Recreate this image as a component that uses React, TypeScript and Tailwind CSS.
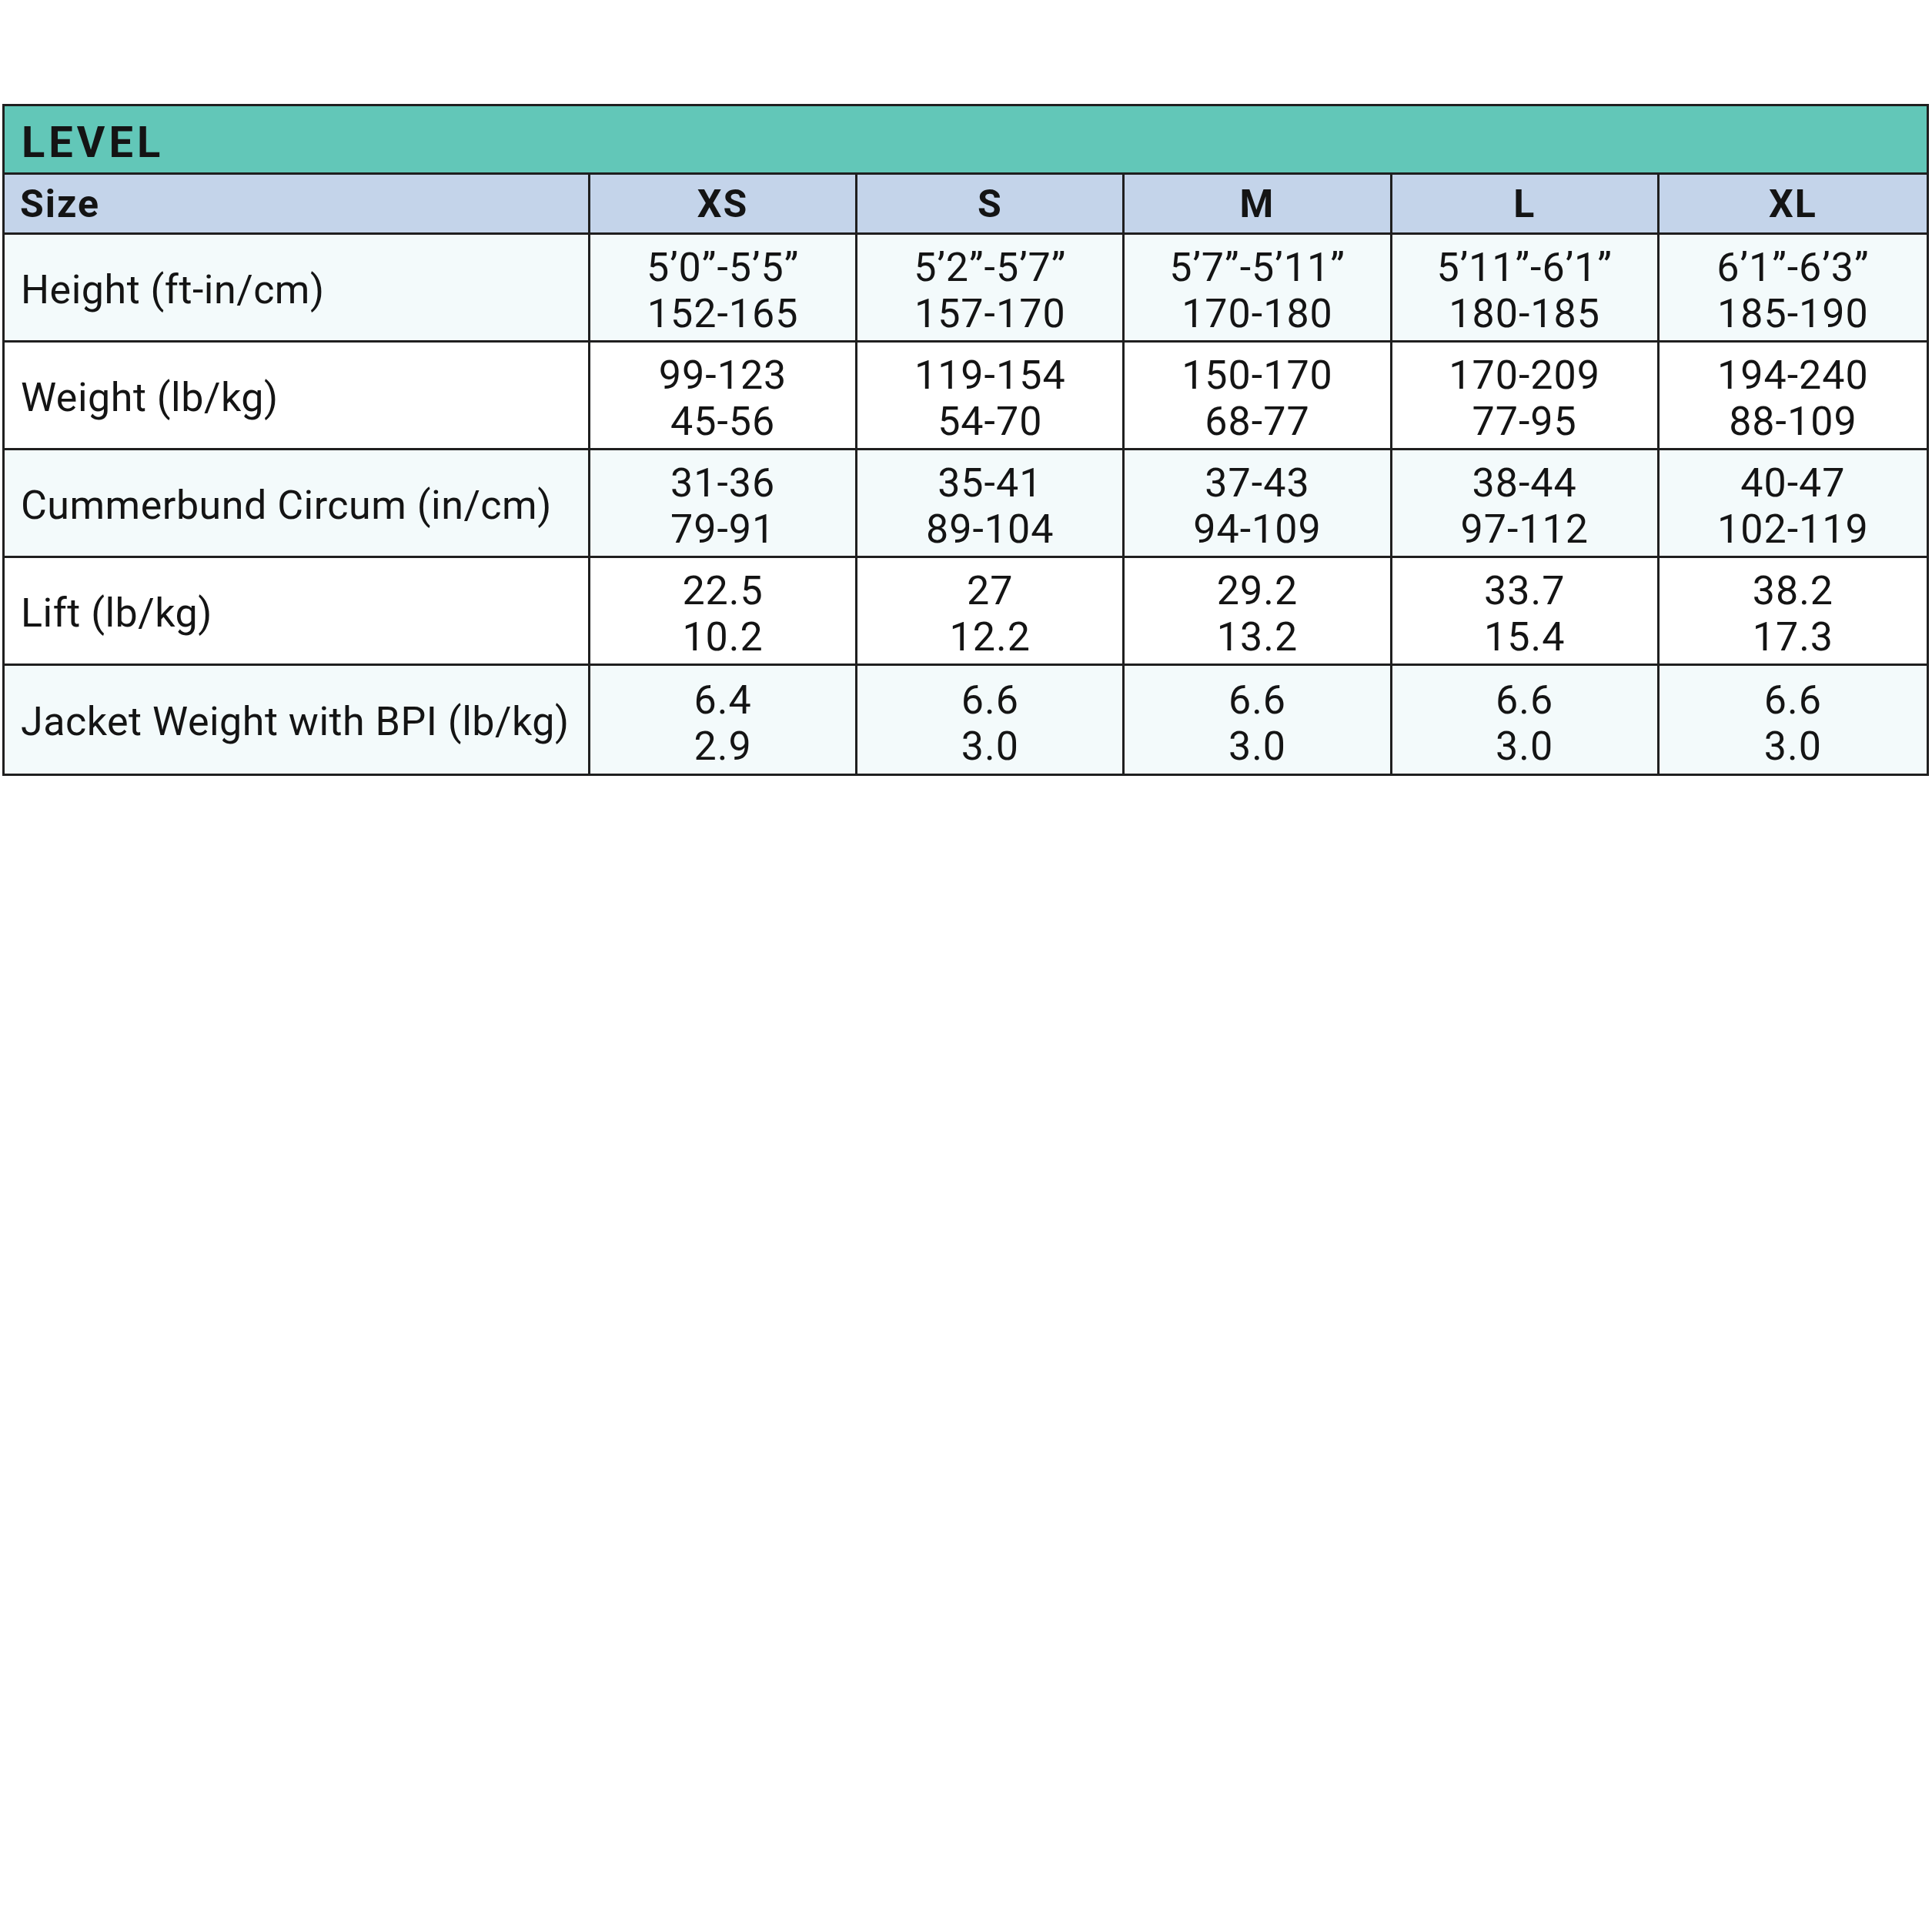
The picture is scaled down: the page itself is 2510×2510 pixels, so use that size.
const SIZES = ["XS", "S", "M", "L", "XL"];

const ROWS: { label: string; values: [string, string][]; shaded: boolean }[] = [
  {
    label: "Height (ft-in/cm)",
    values: [
      ["5’0”-5’5”", "152-165"],
      ["5’2”-5’7”", "157-170"],
      ["5’7”-5’11”", "170-180"],
      ["5’11”-6’1”", "180-185"],
      ["6’1”-6’3”", "185-190"],
    ],
    shaded: true,
  },
  {
    label: "Weight (lb/kg)",
    values: [
      ["99-123", "45-56"],
      ["119-154", "54-70"],
      ["150-170", "68-77"],
      ["170-209", "77-95"],
      ["194-240", "88-109"],
    ],
    shaded: false,
  },
  {
    label: "Cummerbund Circum (in/cm)",
    values: [
      ["31-36", "79-91"],
      ["35-41", "89-104"],
      ["37-43", "94-109"],
      ["38-44", "97-112"],
      ["40-47", "102-119"],
    ],
    shaded: true,
  },
  {
    label: "Lift (lb/kg)",
    values: [
      ["22.5", "10.2"],
      ["27", "12.2"],
      ["29.2", "13.2"],
      ["33.7", "15.4"],
      ["38.2", "17.3"],
    ],
    shaded: false,
  },
  {
    label: "Jacket Weight with BPI (lb/kg)",
    values: [
      ["6.4", "2.9"],
      ["6.6", "3.0"],
      ["6.6", "3.0"],
      ["6.6", "3.0"],
      ["6.6", "3.0"],
    ],
    shaded: true,
  },
];

export default function App() {
  return (
    <div className="w-[2510px] h-[2510px] bg-white pt-[135px] pl-[3px] text-[#141414] font-['Roboto',sans-serif]">
      <div className="w-[2503px] border-[3px] border-[#1f1f1f]">
        {/* Title bar */}
        <div className="h-[89px] bg-[#62c7b8] border-b-[3px] border-[#1f1f1f] flex items-center pl-[22px] pt-[8px]">
          <span className="text-[56px] font-bold tracking-[5px] leading-none">LEVEL</span>
        </div>

        <div className="grid grid-cols-[761px_repeat(5,minmax(0,1fr))]">
          {/* Size header row */}
          <div className="h-[78px] bg-[#c4d4ea] border-b-[3px] border-r-[3px] border-[#1f1f1f] flex items-center pl-[20px] pt-[2px] text-[50px] font-bold tracking-[2px]">
            Size
          </div>
          {SIZES.map((s, i) => (
            <div
              key={s}
              className={`h-[78px] bg-[#c4d4ea] border-b-[3px] border-[#1f1f1f] flex items-center justify-center pt-[2px] text-[50px] font-bold tracking-[2px] ${
                i < SIZES.length - 1 ? "border-r-[3px]" : ""
              }`}
            >
              {s}
            </div>
          ))}

          {/* Data rows */}
          {ROWS.map((row, r) => {
            const bg = row.shaded ? "bg-[#f3fafb]" : "bg-white";
            const bottom = r < ROWS.length - 1 ? "border-b-[3px]" : "";
            return [
              <div
                key={row.label}
                className={`h-[140px] ${bg} ${bottom} border-r-[3px] border-[#1f1f1f] flex items-center pl-[21px] pt-[6px] text-[52px] tracking-[0.5px]`}
              >
                {row.label}
              </div>,
              ...row.values.map(([a, b], i) => (
                <div
                  key={row.label + i}
                  className={`h-[140px] ${bg} ${bottom} border-[#1f1f1f] flex flex-col items-center justify-center pt-[9px] text-[52px] leading-[60px] tracking-[1px] ${
                    i < row.values.length - 1 ? "border-r-[3px]" : ""
                  }`}
                >
                  <span>{a}</span>
                  <span>{b}</span>
                </div>
              )),
            ];
          })}
        </div>
      </div>
    </div>
  );
}
